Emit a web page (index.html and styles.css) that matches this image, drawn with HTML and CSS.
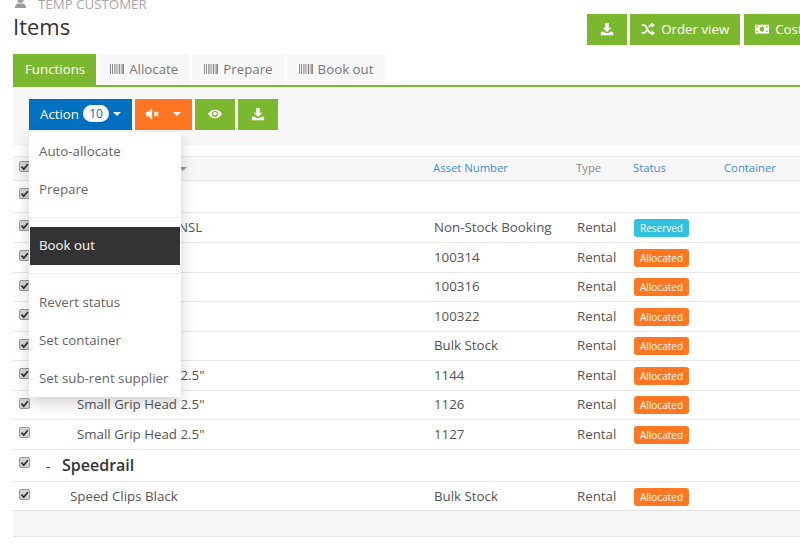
FILE: index.html
```html
<!DOCTYPE html>
<html lang="en">
<head>
<meta charset="utf-8">
<title>Items</title>
<link rel="stylesheet" href="styles.css">
</head>
<body>
<svg class="defs" width="0" height="0" aria-hidden="true">
  <symbol id="i-download" viewBox="0 0 16 16"><path d="M6 1h4v5.500h3L8 11.500 3 6.500h3z"/><path d="M1 11h3.500L6 12.600h4L11.500 11H15v4H1z"/></symbol>
  <symbol id="i-barcode" viewBox="0 0 14 12"><path d="M0 1h1v10H0zM2 1h1v10H2zM4 1h.7v10H4zM5.500 1h1v10h-1zM7.500 1h.7v10h-.7zM9 1h1v10H9zM10.800 1h.7v10h-.7zM12.300 1H14v10h-1.700z"/></symbol>
</svg>
<div class="page">
  <div class="crumb">
    <svg class="crumb-icon" viewBox="0 0 14 14"><circle cx="7" cy="4" r="3.400"/><path d="M1 13c0-3.500 2-4.800 4-5h4c2 .2 4 1.500 4 5z"/></svg>
    <span>TEMP CUSTOMER</span>
  </div>
  <header class="head">
    <h1>Items</h1>
    <div class="head-actions">
      <a class="btn green square"><svg class="ico"><use href="#i-download"/></svg></a>
      <a class="btn green order">
        <svg class="ico" viewBox="0 0 16 16"><path d="M1 3.500h2.500c3 0 4.500 9 7.500 9h1.500M1 12.500h2.500c1.300 0 2.200-1.600 3-3.300M9 6c.6-1.300 1.200-2.500 2-2.500h1.500" fill="none" stroke="currentColor" stroke-width="2"/><path d="M12 .5 16 3.500 12 6.500zM12 9.500l4 3-4 3z"/></svg>
        Order view
      </a>
      <a class="btn green">
        <svg class="ico" viewBox="0 0 16 16"><path fill-rule="evenodd" d="M0 3h16v10H0zM5.500 8a2.500 3 0 0 0 5 0 2.500 3 0 0 0-5 0zM1.500 4.500v2a2 2 0 0 0 2-2zM12.500 4.500a2 2 0 0 0 2 2v-2zM1.500 9.500v2h2a2 2 0 0 0-2-2zM14.500 9.500a2 2 0 0 0-2 2h2z"/></svg>
        Costs
      </a>
    </div>
  </header>

  <nav class="tabs">
    <a class="tab active">Functions</a>
    <a class="tab"><svg class="bar"><use href="#i-barcode"/></svg>Allocate</a>
    <a class="tab"><svg class="bar"><use href="#i-barcode"/></svg>Prepare</a>
    <a class="tab"><svg class="bar"><use href="#i-barcode"/></svg>Book out</a>
  </nav>

  <section class="toolbar">
    <div class="dropdown">
      <a class="btn blue action">Action <span class="count">10</span><i class="caret"></i></a>
      <ul class="menu">
        <li>Auto-allocate</li>
        <li>Prepare</li>
        <li class="divider"></li>
        <li class="current">Book out</li>
        <li class="divider second"></li>
        <li>Revert status</li>
        <li>Set container</li>
        <li>Set sub-rent supplier</li>
      </ul>
    </div>
    <a class="btn orange">
      <svg class="ico" viewBox="0 0 16 16"><path d="M0 5.500h3L7 1.500v13l-4-4H0z"/><path d="m9.500 5.800 4.400 4.400m0-4.400-4.400 4.400" stroke="currentColor" stroke-width="1.800" fill="none"/></svg>
      <i class="caret wide"></i>
    </a>
    <a class="btn green square">
      <svg class="ico" viewBox="0 0 16 16"><path fill-rule="evenodd" d="M0 8c2-3.200 4.800-4.800 8-4.800s6 1.600 8 4.800c-2 3.200-4.800 4.800-8 4.800S2 11.200 0 8zm4.600 0a3.400 3.400 0 1 0 6.800 0 3.400 3.400 0 0 0-6.800 0z"/><circle cx="8" cy="7.600" r="2"/></svg>
    </a>
    <a class="btn green square"><svg class="ico"><use href="#i-download"/></svg></a>
  </section>

  <table class="items">
    <colgroup>
      <col class="c-check"><col class="c-name"><col class="c-asset"><col class="c-type"><col class="c-status"><col class="c-container">
    </colgroup>
    <thead>
      <tr>
        <th><input type="checkbox" checked></th>
        <th class="sort-name"><i class="caret grey"></i></th>
        <th><a>Asset Number</a></th>
        <th class="muted">Type</th>
        <th><a>Status</a></th>
        <th><a>Container</a></th>
      </tr>
    </thead>
    <tbody>
      <tr class="group"><td><input type="checkbox" checked></td><td colspan="5"></td></tr>
      <tr class="tall"><td><input type="checkbox" checked></td><td class="indent">Temporary Unit NSL</td><td>Non-Stock Booking</td><td>Rental</td><td><span class="label cyan">Reserved</span></td><td></td></tr>
      <tr class="tall"><td><input type="checkbox" checked></td><td></td><td>100314</td><td>Rental</td><td><span class="label amber">Allocated</span></td><td></td></tr>
      <tr class="raised"><td><input type="checkbox" checked></td><td></td><td>100316</td><td>Rental</td><td><span class="label amber">Allocated</span></td><td></td></tr>
      <tr class="tall"><td><input type="checkbox" checked></td><td></td><td>100322</td><td>Rental</td><td><span class="label amber">Allocated</span></td><td></td></tr>
      <tr class="raised"><td><input type="checkbox" checked></td><td></td><td>Bulk Stock</td><td>Rental</td><td><span class="label amber">Allocated</span></td><td></td></tr>
      <tr class="tall"><td><input type="checkbox" checked></td><td class="indent">Small Grip Head 2.5"</td><td>1144</td><td>Rental</td><td><span class="label amber">Allocated</span></td><td></td></tr>
      <tr class="raised"><td><input type="checkbox" checked></td><td class="indent">Small Grip Head 2.5"</td><td>1126</td><td>Rental</td><td><span class="label amber">Allocated</span></td><td></td></tr>
      <tr class="tall"><td><input type="checkbox" checked></td><td class="indent">Small Grip Head 2.5"</td><td>1127</td><td>Rental</td><td><span class="label amber">Allocated</span></td><td></td></tr>
      <tr class="group"><td><input type="checkbox" checked></td><td colspan="5"><span class="dash">-</span><span class="group-name">Speedrail</span></td></tr>
      <tr><td><input type="checkbox" checked></td><td class="indent-small">Speed Clips Black</td><td>Bulk Stock</td><td>Rental</td><td><span class="label amber">Allocated</span></td><td></td></tr>
    </tbody>
    <tfoot><tr><td colspan="6"></td></tr></tfoot>
  </table>
</div>
</body>
</html>
```
FILE: styles.css
```css
* { box-sizing: border-box; }
html, body { margin: 0; height: 545px; overflow: hidden; background: #fff; }
body { font: 13.300px/18px "Open Sans", sans-serif; color: #555; }
.defs { position: absolute; }
.page { width: 820px; padding: 0 0 0 13px; }

.crumb { height: 14px; display: flex; gap: 11px; padding-left: 1px; font-size: 13.300px; line-height: 14px; color: #a8a8a8; overflow: hidden; }
.crumb span { position: relative; top: -3px; }
.crumb-icon { width: 13px; height: 13px; fill: #999; flex: none; position: relative; top: -4px; }

.head { display: flex; justify-content: space-between; align-items: flex-start; height: 40px; }
.head h1 { margin: 0; font-size: 22px; font-weight: 400; line-height: 24px; color: #333; }
.head-actions { display: flex; gap: 3px; }
.order { margin-right: 1px; }

.btn { display: inline-flex; align-items: center; justify-content: center; gap: 6px; height: 31px; padding: 0 11px 2px; color: #fff; font-size: 13.300px; white-space: nowrap; }
.btn.square { width: 40px; padding: 0 0 2px; }
.action { gap: 4px; }
.green { background: #7cb82f; }
.blue { background: #0070c0; }
.orange { background: #ff7722; }
.ico { width: 14px; height: 14px; fill: currentColor; flex: none; }

.tabs { display: flex; gap: 2px; height: 33px; border-bottom: 2px solid #7cb82f; }
.tab { display: flex; align-items: center; height: 31px; padding: 0 12px 2px; background: #f7f7f7; color: #777; font-size: 13.300px; white-space: nowrap; }
.tab.active { background: #7cb82f; color: #fff; padding-right: 11px; }
.bar { width: 14px; height: 12px; margin-right: 5px; fill: #888; }

.toolbar { display: flex; gap: 3px; height: 59px; padding: 12px 16px; background: #f7f7f7; }
.dropdown { position: relative; }
.count { display: inline-block; min-width: 26px; height: 17px; border-radius: 9px; background: #fff; color: #0070c0; font-size: 12px; line-height: 17px; text-align: center; }
.caret { display: inline-block; width: 0; height: 0; border: 4px solid transparent; border-top-color: #fff; border-bottom: 0; }
.caret.wide { margin-left: 7px; }
.caret.grey { border-top-color: #999; margin-left: 135px; vertical-align: middle; }

.menu { position: absolute; z-index: 5; left: 0; top: 33px; width: 152px; margin: 0; padding: 0; list-style: none; background: #fff; box-shadow: 0 6px 14px rgba(0,0,0,.18); color: #666; }
.menu li { height: 38px; padding: 0 10px; line-height: 38px; white-space: nowrap; }
.menu .divider { height: 1px; margin: 9px 0; padding: 0; background: #eee; }
.menu .divider.second { margin-top: 8px; }
.menu .current { background: #333; color: #fff; margin: 0 1px; padding: 0 9px; line-height: 36px; }

.items { border-collapse: collapse; table-layout: fixed; width: 847px; margin-top: 10px; }
.c-check { width: 27px; }
.c-name { width: 389px; }
.c-asset { width: 143px; }
.c-type { width: 57px; }
.c-status { width: 91px; }
.c-container { width: 140px; }
.items td { padding: 5px; border-top: 1px solid #e8e8e8; text-align: left; vertical-align: top; }
.items th { padding: 2px 5px 4px 4px; height: 24px; font-size: 11.300px; font-weight: 400; line-height: 17px; text-align: left; vertical-align: top; background: #f7f7f7; border-top: 1px solid #e8e8e8; border-bottom: 1px solid #e4e4e4; }
.items th a { color: #3b8edb; }
.items th.muted { color: #888; }
.items .tall td { padding-bottom: 6px; }
.items .raised td:not(:first-child) { padding-top: 4px; padding-bottom: 6px; }
input[type=checkbox] { appearance: none; display: block; width: 11px; height: 11px; margin: 2px 0 0 1px; border: 1px solid #999; border-radius: 2px; background: #d4d4d4 url("data:image/svg+xml,%3Csvg xmlns='http://www.w3.org/2000/svg' viewBox='0 0 12 12'%3E%3Cpath d='M2 6.200 5 9.500 10.500 3' fill='none' stroke='%23333' stroke-width='2.200'/%3E%3C/svg%3E") center/100% no-repeat; }
.items th input { margin: 2px 0 0 2px; }
.indent { padding-left: 37px !important; }
.indent-small { padding-left: 30px !important; }
.group td { height: 32px; }
.group td:not(:first-child) { padding-top: 4px; padding-bottom: 5px; }
.dash { display: inline-block; width: 17px; padding-left: 1px; color: #333; }
.group-name { font-size: 16px; line-height: 22px; font-weight: 600; color: #333; }
.label { display: block; width: 55px; height: 18px; margin: 1px 0 -1px; border-radius: 3px; color: #fff; font-size: 10px; line-height: 18px; text-align: center; }
.cyan { background: #31c1de; }
.amber { background: #ff7722; }
.items tfoot td { height: 26px; background: #f7f7f7; border-top: 1px solid #e4e4e4; border-bottom: 1px solid #e4e4e4; }
```
